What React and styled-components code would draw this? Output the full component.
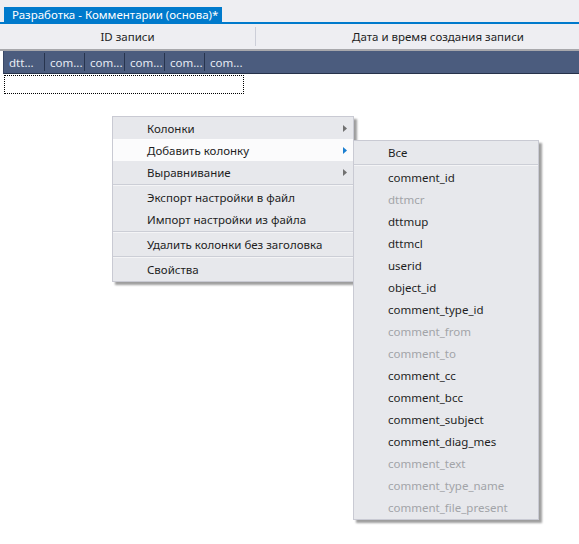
import React from "react";
import styled, { createGlobalStyle } from "styled-components";

const Global = createGlobalStyle`
  html, body { margin: 0; padding: 0; background: #ffffff; }
  body { font-family: "Noto Sans", "Open Sans", sans-serif; font-size: 11px; }
  #root { width: 579px; height: 544px; overflow: hidden; }
`;

const Page = styled.div`
  position: relative;
  width: 579px;
  height: 544px;
  display: flex;
  flex-direction: column;
  background: #ffffff;
  overflow: hidden;
`;

const TabStrip = styled.div`
  height: 22px;
  flex: none;
  background: #eeeef2;
  border-bottom: 2px solid #007acc;
  box-sizing: content-box;
  display: flex;
  align-items: flex-end;
  padding-left: 4px;
`;

const Tab = styled.div`
  width: 218px;
  box-sizing: border-box;
  height: 15px;
  background: #007acc;
  color: #ffffff;
  font-size: 11.5px;
  line-height: 15px;
  padding: 0 0 0 8px;
  white-space: nowrap;
`;

const HeaderRow = styled.div`
  height: 25px;
  flex: none;
  display: flex;
  background: #eeeef2;
  border-bottom: 2px solid #a8a8ac;
  color: #1e1e1e;
  font-size: 11.5px;
  overflow: hidden;
`;

const HeaderCell = styled.div`
  flex: none;
  width: ${p => p.$w}px;
  display: flex;
  align-items: center;
  justify-content: center;
  white-space: nowrap;
  border-right: ${p => (p.$sep ? "1px solid #ccced8" : "none")};
  margin: 3px 0;
`;

const GridArea = styled.div`
  flex: 1;
  display: flex;
  flex-direction: column;
  padding-left: 4px;
  background: #ffffff;
`;

const Band = styled.div`
  height: 22px;
  flex: none;
  margin-left: -1px;
  background: #4b5c7e;
  border-left: 1px solid #3a4866;
  border-bottom: 1px solid #26324a;
  display: flex;
  align-items: stretch;
`;

const BandCell = styled.div`
  flex: none;
  width: ${p => p.$w}px;
  box-sizing: border-box;
  padding-left: 5px;
  color: #e8ecf4;
  font-size: 11.5px;
  display: flex;
  align-items: center;
  white-space: nowrap;
  border-right: ${p => (p.$sep ? "1px solid #27344e" : "none")};
  margin: 2px 0;
`;

const FocusRow = styled.div`
  margin-top: 1px;
  width: 240px;
  height: 19px;
  box-sizing: border-box;
  border: 1px dotted #000000;
`;

const Menu = styled.div`
  position: absolute;
  left: ${p => p.$x}px;
  top: ${p => p.$y}px;
  width: ${p => p.$w}px;
  box-sizing: border-box;
  background: #e7e8ec;
  border: 1px solid #c9cad3;
  padding: 0 0 1px 0;
  box-shadow: 3px 3px 2px rgba(0, 0, 0, 0.38);
  color: #1e1e1e;
`;

const Item = styled.div`
  height: 22px;
  display: flex;
  align-items: center;
  justify-content: space-between;
  padding: 0 6px 0 34px;
  white-space: nowrap;
  font-size: 11.5px;
  background: ${p => (p.$active ? "#fbfbfc" : "transparent")};
  color: ${p => (p.$disabled ? "#a2a4a8" : "#1e1e1e")};
`;

const Separator = styled.div`
  height: 1px;
  margin: 1px 0 0 0;
  background: #ccced6;
  border-bottom: 1px solid #f4f4f6;
`;

const Arrow = ({ color }) => (
  <svg width="4" height="7" viewBox="0 0 4 7">
    <path d="M0 0 L4 3.5 L0 7 Z" fill={color} />
  </svg>
);

const MenuItem = ({ label, sub, active, disabled }) => (
  <Item $active={active} $disabled={disabled}>
    <span>{label}</span>
    {sub && <Arrow color={active ? "#1c7fd0" : "#717171"} />}
  </Item>
);

const cols = ["dtt...", "com...", "com...", "com...", "com...", "com..."];

const subItems = [
  ["comment_id", false],
  ["dttmcr", true],
  ["dttmup", false],
  ["dttmcl", false],
  ["userid", false],
  ["object_id", false],
  ["comment_type_id", false],
  ["comment_from", true],
  ["comment_to", true],
  ["comment_cc", false],
  ["comment_bcc", false],
  ["comment_subject", false],
  ["comment_diag_mes", false],
  ["comment_text", true],
  ["comment_type_name", true],
  ["comment_file_present", true],
];

export default function App() {
  return (
    <>
      <Global />
      <Page>
        <TabStrip>
          <Tab>Разработка - Комментарии (основа)*</Tab>
        </TabStrip>
        <HeaderRow>
          <HeaderCell $w={255} $sep>ID записи</HeaderCell>
          <HeaderCell $w={364}>Дата и время создания записи</HeaderCell>
        </HeaderRow>
        <GridArea>
          <Band>
            {cols.map((c, i) => (
              <BandCell key={i} $w={i === 0 ? 41 : 40} $sep={i < cols.length - 1}>
                {c}
              </BandCell>
            ))}
          </Band>
          <FocusRow />
        </GridArea>

        <Menu $x={112} $y={116} $w={242}>
          <MenuItem label="Колонки" sub />
          <MenuItem label="Добавить колонку" sub active />
          <MenuItem label="Выравнивание" sub />
          <Separator />
          <MenuItem label="Экспорт настройки в файл" />
          <MenuItem label="Импорт настройки из файла" />
          <Separator />
          <MenuItem label="Удалить колонки без заголовка" />
          <Separator />
          <MenuItem label="Свойства" />
        </Menu>

        <Menu $x={353} $y={140} $w={186}>
          <MenuItem label="Все" />
          <Separator />
          {subItems.map(([l, d]) => (
            <MenuItem key={l} label={l} disabled={d} />
          ))}
        </Menu>
      </Page>
    </>
  );
}
